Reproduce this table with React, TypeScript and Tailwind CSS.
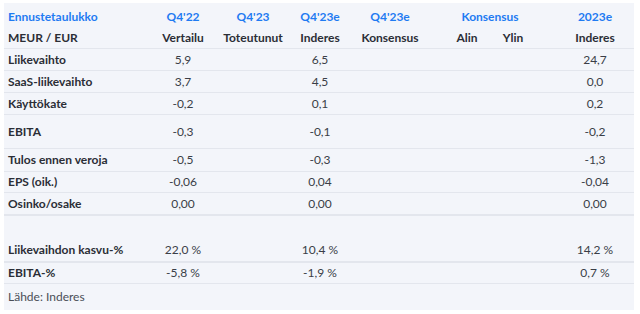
import React from 'react';

type RowData = {
  label: string;
  values: string[];
  h: string;
  border: string;
};

const widths = ['w-[70px]', 'w-[70px]', 'w-[64px]', 'w-[76px]', 'w-[54px]', 'w-[38px]', 'w-[78px]'];

const rows: RowData[] = [
  { label: 'Liikevaihto', values: ['5,9', '', '6,5', '', '', '', '24,7'], h: 'h-[22px]', border: 'border-b border-[#e3e6ed]' },
  { label: 'SaaS-liikevaihto', values: ['3,7', '', '4,5', '', '', '', '0,0'], h: 'h-[22px]', border: 'border-b border-[#e3e6ed]' },
  { label: 'Käyttökate', values: ['-0,2', '', '0,1', '', '', '', '0,2'], h: 'h-[22px]', border: 'border-b border-[#e3e6ed]' },
  { label: 'EBITA', values: ['-0,3', '', '-0,1', '', '', '', '-0,2'], h: 'h-[34px]', border: 'border-b border-[#e3e6ed]' },
  { label: 'Tulos ennen veroja', values: ['-0,5', '', '-0,3', '', '', '', '-1,3'], h: 'h-[23px]', border: 'border-b border-[#e3e6ed]' },
  { label: 'EPS (oik.)', values: ['-0,06', '', '0,04', '', '', '', '-0,04'], h: 'h-[21px]', border: 'border-b border-[#e3e6ed]' },
  { label: 'Osinko/osake', values: ['0,00', '', '0,00', '', '', '', '0,00'], h: 'h-[23px]', border: 'border-b-2 border-[#e3e6ed]' },
];

const ratioRows: RowData[] = [
  { label: 'Liikevaihdon kasvu-%', values: ['22,0 %', '', '10,4 %', '', '', '', '14,2 %'], h: 'h-[24px]', border: 'border-b-2 border-[#e3e6ed]' },
  { label: 'EBITA-%', values: ['-5,8 %', '', '-1,9 %', '', '', '', '0,7 %'], h: 'h-[21px]', border: 'border-b border-[#e3e6ed]' },
];

// spacer columns sit before Alin (12px) and before 2023e (24px)
const Cells: React.FC<{ values: string[]; className?: string }> = ({ values, className }) => (
  <>
    {values.map((v, i) => (
      <React.Fragment key={i}>
        {i === 4 && <div className="w-[12px] shrink-0" />}
        {i === 6 && <div className="w-[24px] shrink-0" />}
        <div className={`${widths[i]} shrink-0 text-center ${className ?? ''}`}>{v}</div>
      </React.Fragment>
    ))}
  </>
);

const Row: React.FC<{ row: RowData }> = ({ row }) => (
  <div className={`flex items-center ${row.h} ${row.border}`}>
    <div className="w-[144px] shrink-0 pl-[4px] font-bold text-[#2b2e36]">{row.label}</div>
    <Cells values={row.values} className="text-[#3a3e47]" />
  </div>
);

export default function App() {
  return (
    <div className="w-[640px] h-[314px] bg-white pt-[3px] pl-[4px]" style={{ fontFamily: 'Lato, "Noto Sans", sans-serif' }}>
      <div className="w-[630px] h-[307px] bg-[#f3f5fa] text-[12px] leading-[16px]">
        {/* otsikkorivi */}
        <div className="flex items-center h-[27px] font-bold text-[#1f7bf2]">
          <div className="w-[144px] shrink-0 pl-[4px]">Ennustetaulukko</div>
          <div className="w-[70px] shrink-0 text-center">Q4'22</div>
          <div className="w-[70px] shrink-0 text-center">Q4'23</div>
          <div className="w-[64px] shrink-0 text-center">Q4'23e</div>
          <div className="w-[76px] shrink-0 text-center">Q4'23e</div>
          <div className="w-[104px] shrink-0 pl-[20px] text-center">Konsensus</div>
          <div className="w-[24px] shrink-0" />
          <div className="w-[78px] shrink-0 text-center">2023e</div>
        </div>
        <div className="flex items-center h-[19px] pb-[3px] border-b border-[#e3e6ed] font-bold text-[#2b2e36]">
          <div className="w-[144px] shrink-0 pl-[4px]">MEUR / EUR</div>
          <Cells values={['Vertailu', 'Toteutunut', 'Inderes', 'Konsensus', 'Alin', 'Ylin', 'Inderes']} />
        </div>

        {rows.map((r) => (
          <Row key={r.label} row={r} />
        ))}

        <div className="h-[23px]" />

        {ratioRows.map((r) => (
          <Row key={r.label} row={r} />
        ))}

        <div className="flex items-center h-[26px] pl-[4px] text-[#4a4e57]">Lähde: Inderes</div>
      </div>
    </div>
  );
}
